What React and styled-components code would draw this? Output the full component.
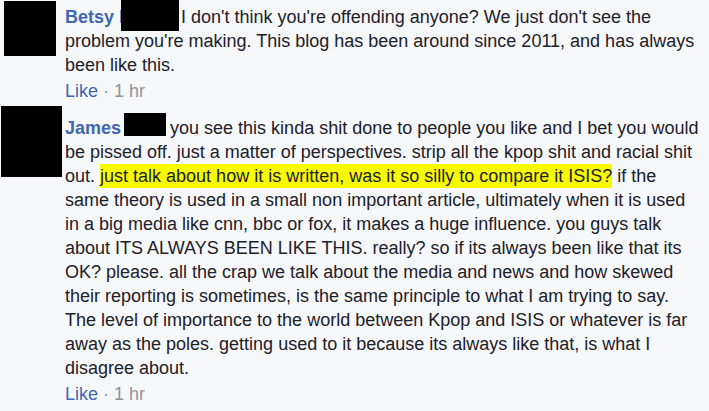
import React from 'react';
import styled, { createGlobalStyle } from 'styled-components';

const GlobalStyle = createGlobalStyle`
  html, body {
    margin: 0;
    background: #f6f7f9;
  }
  body {
    font-family: "Liberation Sans", Arial, sans-serif;
    font-size: 18px;
    color: #1d2129;
  }
`;

const Thread = styled.div`
  width: 709px;
  height: 411px;
  overflow: hidden;
  background: #f6f7f9;
`;

const Comment = styled.div`
  display: grid;
  grid-template-columns: 65px 636px;
  align-items: start;
`;

const Avatar = styled.div`
  width: ${(p) => p.$w}px;
  height: ${(p) => p.$h}px;
  margin-left: ${(p) => p.$x}px;
  margin-top: ${(p) => p.$y}px;
  background: #000;
`;

const Body = styled.div`
  padding-top: ${(p) => p.$top}px;
`;

const Text = styled.div`
  line-height: 24px;
`;

const Name = styled.span`
  font-weight: 700;
  color: #4267b2;
`;

const Redacted = styled.span`
  display: inline-block;
  vertical-align: top;
  width: ${(p) => p.$w}px;
  height: ${(p) => p.$h}px;
  margin: ${(p) => p.$dy}px ${(p) => p.$after}px -20px ${(p) => p.$before}px;
  background: #000;
`;

const Mark = styled.span`
  background: #f8fb00;
  padding: 2px 0;
`;

const Meta = styled.div`
  margin-top: 2px;
  line-height: 24px;
  color: #90949c;
`;

const Like = styled.span`
  color: #4267b2;
`;

const App = () => {
  return (
    <Thread>
      <GlobalStyle />
      <Comment>
        <Avatar $w={52} $h={55} $x={4} $y={1} />
        <Body $top={4.8}>
          <Text>
            <Name>Betsy I</Name>
            <Redacted $w={58} $h={31} $dy={-4.8} $before={-3} $after={2} />
            I don't think you're offending anyone? We just don't see the
            problem you're making. This blog has been around since 2011, and
            has always been like this.
          </Text>
          <Meta>
            <Like>Like</Like> · 1 hr
          </Meta>
        </Body>
      </Comment>
      <Comment>
        <Avatar $w={61} $h={71} $x={1} $y={3} />
        <Body $top={13}>
          <Text>
            <Name>James</Name>
            <Redacted $w={42} $h={23} $dy={-3} $before={3} $after={4} />
            you see this kinda shit done to people you like and I bet you would
            be pissed off. just a matter of perspectives. strip all the kpop
            shit and racial shit out.{' '}
            <Mark>just talk about how it is written, was it so silly to compare it ISIS?</Mark>{' '}
            if the same theory is used in a small non important article,
            ultimately when it is used in a big media like cnn, bbc or fox, it
            makes a huge influence. you guys talk about ITS ALWAYS BEEN LIKE
            THIS. really? so if its always been like that its OK? please. all
            the crap we talk about the media and news and how skewed their
            reporting is sometimes, is the same principle to what I am trying to
            say. The level of importance to the world between Kpop and ISIS or
            whatever is far away as the poles. getting used to it because its
            always like that, is what I disagree about.
          </Text>
          <Meta>
            <Like>Like</Like> · 1 hr
          </Meta>
        </Body>
      </Comment>
    </Thread>
  );
};

export default App;
